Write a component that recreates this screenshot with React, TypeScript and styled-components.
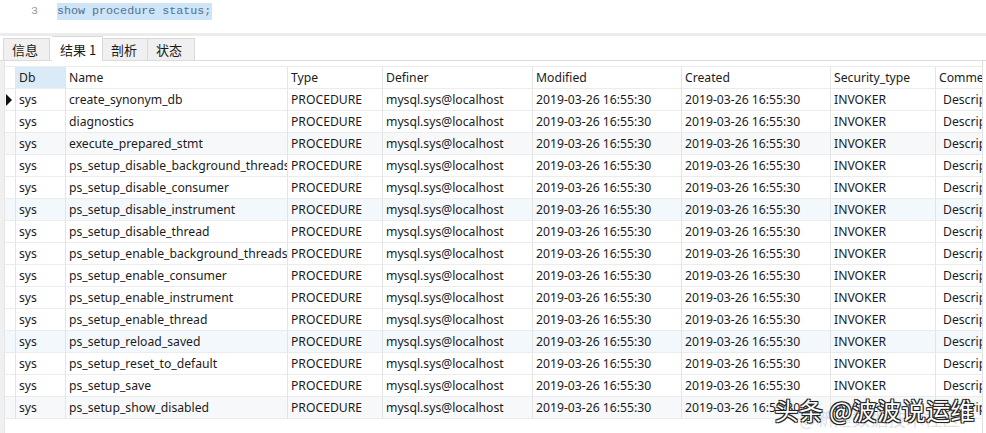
import React from "react";
import styled, { createGlobalStyle } from "styled-components";

const GlobalStyle = createGlobalStyle`
  html, body {
    margin: 0;
    padding: 0;
    background: #ffffff;
    overflow: hidden;
  }
  body {
    font-family: "Noto Sans", "Noto Sans CJK SC", sans-serif;
  }
`;

const COLS = "11px 50px 222px 95px 150px 149px 149px 105px 47px";

const Page = styled.div`
  width: 986px;
  height: 433px;
  display: flex;
  flex-direction: column;
  position: relative;
  background: #fff;
`;

const Editor = styled.div`
  height: 36px;
  display: flex;
  align-items: flex-start;
  padding-top: 3px;
  box-sizing: border-box;
  border-bottom: 3px solid #ececec;
  font-family: "Liberation Mono", "DejaVu Sans Mono", monospace;
  font-size: 11.7px;
`;

const LineNo = styled.span`
  width: 38px;
  text-align: right;
  color: #9a9a9a;
  line-height: 17px;
`;

const Code = styled.span`
  margin-left: 19px;
  background: #cfe4f7;
  color: #4d7399;
  line-height: 17px;
  padding: 0 1px 0 0;
`;

const TabBar = styled.div`
  height: 25px;
  display: flex;
  align-items: flex-end;
  padding-left: 3px;
  border-bottom: 1px solid #dcdcdc;
  box-sizing: border-box;
`;

const Tab = styled.div<{ $active?: boolean; $w: number }>`
  width: ${p => p.$w}px;
  height: ${p => (p.$active ? 25 : 22)}px;
  box-sizing: border-box;
  display: flex;
  align-items: center;
  padding-left: 8px;
  background: ${p => (p.$active ? "#ffffff" : "#f0f0f0")};
  border: 1px solid #d9d9d9;
  border-bottom: none;
  margin-left: ${p => (p.$active ? 2 : 0)}px;
  margin-bottom: ${p => (p.$active ? -1 : 0)}px;
  font-family: "Noto Sans CJK SC", sans-serif;
  font-size: 13px;
  color: #1a1a1a;
  & + & {
    border-left: ${p => (p.$active ? "1px solid #d9d9d9" : "none")};
  }
`;

const Body = styled.div`
  flex: 1;
  display: flex;
  min-height: 0;
`;

const Strip = styled.div`
  width: 4px;
  background: #f0f0f0;
  border-right: 1px solid #e6e6e6;
`;

const Grid = styled.div`
  width: 978px;
  padding-top: 5px;
  border-right: 1px solid #dedede;
  box-sizing: border-box;
  position: relative;
`;

const Row = styled.div<{ $tint?: string }>`
  display: grid;
  grid-template-columns: ${COLS};
  height: 22px;
  background: ${p => p.$tint || "transparent"};
  font-size: 12.2px;
  color: #1b1b1b;
`;

const Cell = styled.div<{ $hl?: boolean; $pad?: number }>`
  border-right: 1px solid #e4e4e4;
  border-bottom: 1px solid #ececec;
  box-sizing: border-box;
  padding-left: ${p => p.$pad ?? 3}px;
  line-height: 21px;
  white-space: nowrap;
  overflow: hidden;
  background: ${p => (p.$hl ? "#dbeaf7" : "transparent")};
`;

const HeadRow = styled(Row)`
  border-top: 1px solid #ececec;
`;

const Marker = styled(Cell)`
  padding-left: 1px;
  display: flex;
  align-items: center;
`;

const Arrow = styled.span`
  width: 0;
  height: 0;
  border-top: 6px solid transparent;
  border-bottom: 6px solid transparent;
  border-left: 6px solid #111;
`;

const Watermark = styled.div`
  position: absolute;
  right: 7px;
  bottom: 9px;
  font-family: "Noto Sans CJK SC", sans-serif;
  font-size: 24px;
  line-height: 28px;
  color: #fff;
  letter-spacing: 0.5px;
  text-shadow: -1px -1px 0 #222, 1px -1px 0 #222, -1px 1px 0 #222, 1px 1px 0 #222, 0 0 2px #000;
`;

const WatermarkFaint = styled.div`
  position: absolute;
  right: 22px;
  bottom: 2px;
  font-family: "Noto Sans CJK SC", sans-serif;
  font-size: 18px;
  color: rgba(200, 200, 200, 0.55);
`;

const names = [
  "create_synonym_db",
  "diagnostics",
  "execute_prepared_stmt",
  "ps_setup_disable_background_threads",
  "ps_setup_disable_consumer",
  "ps_setup_disable_instrument",
  "ps_setup_disable_thread",
  "ps_setup_enable_background_threads",
  "ps_setup_enable_consumer",
  "ps_setup_enable_instrument",
  "ps_setup_enable_thread",
  "ps_setup_reload_saved",
  "ps_setup_reset_to_default",
  "ps_setup_save",
  "ps_setup_show_disabled",
];

const tints: Record<number, string> = {
  2: "#f7f8f9",
  5: "#f3f8fd",
  11: "#f3f8fd",
  14: "#f7f8f9",
};

const headers = ["Db", "Name", "Type", "Definer", "Modified", "Created", "Security_type", "Comme"];
const stamp = "2019-03-26 16:55:30";

export default function App() {
  return (
    <Page>
      <GlobalStyle />
      <Editor>
        <LineNo>3</LineNo>
        <Code>show procedure status;</Code>
      </Editor>
      <TabBar>
        <Tab $w={47}>信息</Tab>
        <Tab $w={51} $active>结果 1</Tab>
        <Tab $w={45}>剖析</Tab>
        <Tab $w={47}>状态</Tab>
      </TabBar>
      <Body>
        <Strip />
        <Grid>
          <HeadRow>
            <Cell />
            {headers.map((h, i) => (
              <Cell key={h} $hl={i === 0}>{h}</Cell>
            ))}
          </HeadRow>
          {names.map((n, i) => (
            <Row key={n} $tint={tints[i]}>
              <Marker>{i === 0 && <Arrow />}</Marker>
              <Cell>sys</Cell>
              <Cell>{n}</Cell>
              <Cell>PROCEDURE</Cell>
              <Cell>mysql.sys@localhost</Cell>
              <Cell>{stamp}</Cell>
              <Cell>{stamp}</Cell>
              <Cell>INVOKER</Cell>
              <Cell $pad={7}>Description</Cell>
            </Row>
          ))}
          <WatermarkFaint>@新建数据技术社区</WatermarkFaint>
          <Watermark>头条 @波波说运维</Watermark>
        </Grid>
      </Body>
    </Page>
  );
}
